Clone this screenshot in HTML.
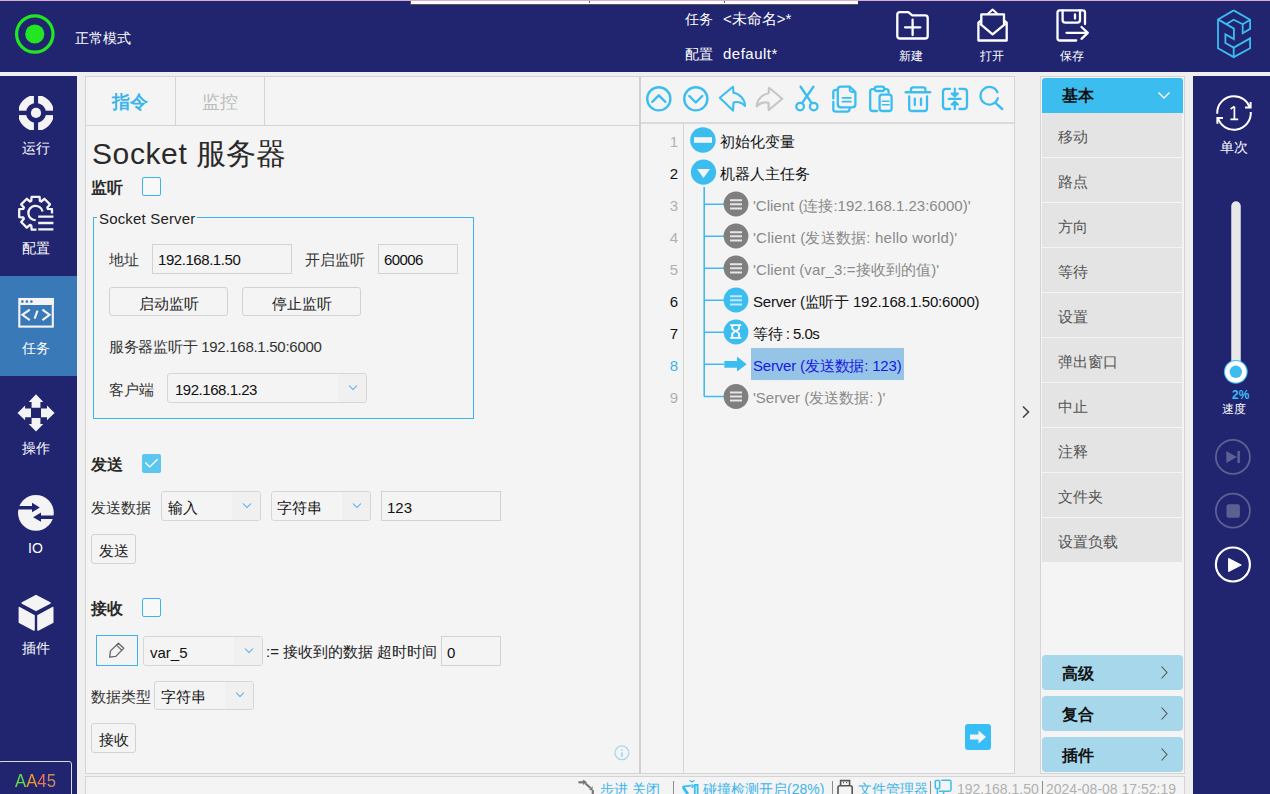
<!DOCTYPE html>
<html><head><meta charset="utf-8">
<style>
*{margin:0;padding:0;box-sizing:border-box}
html,body{width:1270px;height:794px;overflow:hidden;background:#efefef;font-family:"Liberation Sans",sans-serif;color:#222}
.a{position:absolute}
.nav{background:#212570}
.t{position:absolute;white-space:nowrap;line-height:20px;height:20px}
.w{color:#fff}
.inp{position:absolute;border:1px solid #d2d2d2;background:#f4f4f4}
.btn{position:absolute;border:1px solid #d2d2d2;border-radius:3px;background:#f4f4f4}
.cmb{position:absolute;border:1px solid #d6d6d6;border-radius:3px;background:#f4f4f4;overflow:hidden}
.cmb i{position:absolute;right:0;top:0;bottom:0;width:28px;background:#f0f0f0}
.pi{position:absolute;left:1042px;width:140px;height:44px;background:#e4e4e4}
.grp{position:absolute;left:1042px;width:141px;height:35px;background:#a6d7eb;border-radius:4px}
</style></head>
<body>
<!-- ===== backgrounds ===== -->
<div class="a nav" style="left:0;top:0;width:1270px;height:72px"></div>
<div class="a" style="left:0;top:0;width:1270px;height:1px;background:#d9acd0"></div>
<div class="a" style="left:410px;top:1px;width:448px;height:4px;background:#fff;border-bottom:1px solid #555;border-left:1px solid #555"></div>
<div class="a" style="left:589px;top:1px;width:1px;height:2px;background:#666"></div>
<div class="a" style="left:724px;top:1px;width:1px;height:2px;background:#666"></div>

<div class="a nav" style="left:0;top:76px;width:77px;height:718px"></div>
<div class="a" style="left:0;top:276px;width:77px;height:100px;background:#3a79b8"></div>
<div class="a" style="left:-2px;top:761px;width:74px;height:40px;border:1.5px solid #dcdce6;border-radius:3px"></div>

<div class="a nav" style="left:1193px;top:76px;width:77px;height:718px"></div>

<!-- left panel -->
<div class="a" style="left:85px;top:76px;width:556px;height:698px;background:#f4f4f4;border:1px solid #d4d4d4"></div>
<div class="a" style="left:86px;top:125px;width:554px;height:1px;background:#d4d4d4"></div>
<div class="a" style="left:175px;top:77px;width:1px;height:48px;background:#d4d4d4"></div>
<div class="a" style="left:264px;top:77px;width:1px;height:48px;background:#d4d4d4"></div>

<!-- middle panel -->
<div class="a" style="left:640px;top:76px;width:375px;height:698px;background:#f4f4f4;border:1px solid #d4d4d4"></div>
<div class="a" style="left:639px;top:77px;width:2px;height:696px;background:#d0d0d0"></div>
<div class="a" style="left:641px;top:122px;width:373px;height:2px;background:#dadada"></div>
<div class="a" style="left:683px;top:124px;width:1px;height:649px;background:#d4d4d4"></div>

<!-- palette -->
<div class="a" style="left:1040px;top:76px;width:145px;height:698px;background:#f4f4f4;border:1px solid #d4d4d4"></div>

<!-- status bar -->
<div class="a" style="left:85px;top:776px;width:1100px;height:20px;background:#f4f4f4;border:1px solid #d4d4d4"></div>

<!-- ===== icons ===== -->
<svg class="a" style="left:0;top:0" width="1270" height="794" viewBox="0 0 1270 794">
 <!-- status indicator -->
 <circle cx="34.8" cy="34" r="18.2" fill="none" stroke="#22e622" stroke-width="3.2"/>
 <circle cx="34.8" cy="34" r="9.6" fill="#22e622"/>
 <!-- new folder -->
 <g fill="none" stroke="#fff" stroke-width="2.3" stroke-linejoin="round" stroke-linecap="round">
  <path d="M900,12.1 L908.3,12.1 L912.3,15.4 L925.2,15.4 Q927.7,15.4 927.7,18 L927.7,36 Q927.7,38.5 925.2,38.5 L900,38.5 Q897.3,38.5 897.3,36 L897.3,14.7 Q897.3,12.1 900,12.1Z"/>
  <path d="M905,27.3 H920.3 M912.6,19.7 V35"/>
  <!-- open envelope -->
  <path d="M981.3,23.5 V14.3 H1004 V23.5"/>
  <path d="M981,20.5 L978.4,22.6 V40.5 H1006.7 V22.6 L1004,20.5"/>
  <path d="M980.5,24.2 L992.6,34.3 L1005,24.2"/>
  <!-- save -->
  <path d="M1076.2,40.5 H1059.8 Q1057.5,40.5 1057.5,38.2 V12.6 Q1057.5,10.3 1059.8,10.3 H1082.7 Q1085,10.3 1085,12.6 V24"/>
  <path d="M1062.6,10.5 V20 Q1062.6,22.6 1065.2,22.6 H1077.4 Q1080,22.6 1080,20 V10.5"/>
  <path d="M1075,14.5 V18.5"/>
  <path d="M1066.5,32.8 H1087.5 M1081.5,27 L1087.8,32.8 L1081.5,38.8"/>
 </g>
 <!-- logo -->
 <g fill="none" stroke="#3cbdf0" stroke-width="1.8" stroke-linejoin="miter">
  <path d="M1233.7,10.4 L1218,19.4 L1218,48.3 L1233.7,57.1 L1250.1,48.3 L1250.1,38.4 L1233.7,47.6 L1225.4,43 L1225.4,34.2 L1233.9,39.1 L1233.9,28.6 L1218,19.4"/>
  <path d="M1233.7,10.4 L1250.1,19.75 L1250.1,28.9 L1242.7,33.2 L1242.7,24.2 L1250.1,19.75"/>
  <path d="M1226.1,24.2 L1233.7,19.75 L1242.7,24.2"/>
  <path d="M1233.7,47.6 V57.1"/>
 </g>

 <!-- sidebar: run -->
 <defs>
  <mask id="mrun"><rect x="0" y="76" width="77" height="100" fill="#fff"/><rect x="33.9" y="90" width="4.2" height="46" fill="#000"/><rect x="14" y="110.7" width="46" height="4.4" fill="#000"/></mask>
 </defs>
 <g mask="url(#mrun)">
  <circle cx="36" cy="112.9" r="14" fill="none" stroke="#f4f4f4" stroke-width="8"/>
 </g>
 <circle cx="36" cy="112.9" r="5.1" fill="#f4f4f4"/>
 <!-- sidebar: config gear -->
 <defs>
  <mask id="mgear"><rect x="0" y="176" width="77" height="100" fill="#fff"/><rect x="36.5" y="213.5" width="30" height="30" fill="#000"/></mask>
 </defs>
 <g fill="none" stroke="#f4f4f4" stroke-width="2.3" stroke-linejoin="round">
  <path mask="url(#mgear)" d="M31.3,200.9 L31.6,196.8 L39.6,196.8 L39.9,200.9 L41.2,201.5 L44.4,198.8 L50.0,204.4 L47.3,207.6 L47.9,208.9 L52.0,209.2 L52.0,217.2 L47.9,217.5 L47.3,218.8 L50.0,222.0 L44.4,227.6 L41.2,224.9 L39.9,225.5 L39.6,229.6 L31.6,229.6 L31.3,225.5 L30.0,224.9 L26.8,227.6 L21.2,222.0 L23.9,218.8 L23.3,217.5 L19.2,217.2 L19.2,209.2 L23.3,208.9 L23.9,207.6 L21.2,204.4 L26.8,198.8 L30.0,201.5Z"/>
  <path d="M35.7,220.2 A7.2,7.2 0 1 1 42.6,211.5"/>
  <path d="M38.2,216.6 H53.4 M38.2,223 H53.4 M38.2,229.4 H53.4"/>
 </g>
 <!-- sidebar: task -->
 <g fill="none" stroke="#f4f4f4" stroke-width="2.1">
  <rect x="19.3" y="299" width="33.5" height="27.6"/>
  <path d="M29.8,309.7 L22.4,314.8 L29.8,320.1 M37.5,310.6 L34.6,318.7 M42.4,309.7 L49.6,314.8 L42.4,320.1"/>
 </g>
 <rect x="19" y="298" width="34.8" height="7" fill="#f4f4f4"/>
 <circle cx="22.4" cy="301.6" r="1.3" fill="#3a79b8"/><circle cx="26.9" cy="301.6" r="1.3" fill="#3a79b8"/><circle cx="31.4" cy="301.6" r="1.3" fill="#3a79b8"/>
 <!-- sidebar: operate -->
 <g fill="#f4f4f4">
  <path d="M36,394.3 L43.3,401.9 L40.4,401.9 L40.4,407.8 L31.6,407.8 L31.6,401.9 L28.7,401.9Z"/>
  <path d="M36,431.5 L43.3,423.9 L40.4,423.9 L40.4,418 L31.6,418 L31.6,423.9 L28.7,423.9Z"/>
  <path d="M17.5,412.9 L25.1,405.6 L25.1,408.5 L31,408.5 L31,417.3 L25.1,417.3 L25.1,420.2Z"/>
  <path d="M54.6,412.9 L47,405.6 L47,408.5 L41,408.5 L41,417.3 L47,417.3 L47,420.2Z"/>
 </g>
 <!-- sidebar: IO -->
 <circle cx="35.9" cy="512.9" r="17.9" fill="#f4f4f4"/>
 <g fill="#212570">
  <path d="M17,505.9 H32 V502.7 L39.8,507.6 L32,512.3 V509.4 H17Z"/>
  <path d="M55,515.5 H41 V512.6 L33.1,517.2 L41,521.8 V519 H55Z"/>
 </g>
 <!-- sidebar: plugin -->
 <g fill="#f4f4f4" stroke="#f4f4f4" stroke-width="1.6" stroke-linejoin="round">
  <path d="M36,595.6 L50,603 L36,610.4 L22.2,603Z"/>
  <path d="M19.4,607.6 L34,615.6 L34,630 L19.4,622.2Z"/>
  <path d="M52.7,607.6 L38,615.6 L38,630 L52.7,622.2Z"/>
 </g>

 <!-- right sidebar: single -->
 <g fill="none" stroke="#fff" stroke-width="2">
  <path d="M1249.8,107.4 A16.8,16.8 0 0 0 1234,96.2 A16.8,16.8 0 0 0 1217.2,113.7"/>
  <path d="M1217.9,117.8 A16.8,16.8 0 0 0 1250.77,112"/>
  <path d="M1250.6,102 V107.5 H1245" stroke-linejoin="miter"/>
  <path d="M1217.4,123.8 V118 H1223" stroke-linejoin="miter"/>
 </g>
 <!-- slider -->
 <line x1="1236" y1="206" x2="1236" y2="370" stroke="#e8e8e8" stroke-width="9.5" stroke-linecap="round"/>
 <circle cx="1235.8" cy="371.8" r="11.9" fill="#3cbdf0"/>
 <circle cx="1235.8" cy="371.8" r="10.8" fill="#fff"/>
 <circle cx="1235.8" cy="371.8" r="6.2" fill="#3cbdf0"/>
 <!-- step / stop / play -->
 <circle cx="1232.9" cy="456.9" r="17" fill="none" stroke="#5d6092" stroke-width="1.8"/>
 <path d="M1226.3,451 L1236.9,457 L1226.3,462.9Z M1237.4,451 H1239.9 V462.9 H1237.4Z" fill="#5d6092"/>
 <circle cx="1232.9" cy="510.7" r="17" fill="none" stroke="#5d6092" stroke-width="1.8"/>
 <rect x="1226.5" y="504.3" width="13.4" height="13.4" rx="2" fill="#5d6092"/>
 <circle cx="1232.9" cy="564.5" r="17" fill="none" stroke="#fff" stroke-width="2.2"/>
 <path d="M1228.6,558.4 L1241.3,565 L1228.6,571.6Z" fill="#fff" stroke="#fff" stroke-width="1" stroke-linejoin="round"/>
</svg>

<!-- ===== header text ===== -->
<div class="t w" style="left:75px;top:28px;font-size:14px">正常模式</div>
<div class="t w" style="left:685px;top:9px;font-size:14px">任务</div>
<div class="t w" style="left:723px;top:9px;font-size:15px">&lt;未命名&gt;*</div>
<div class="t w" style="left:685px;top:44px;font-size:14px">配置</div>
<div class="t w" style="left:723px;top:44px;font-size:15px;letter-spacing:0.5px">default*</div>
<div class="t w" style="left:899px;top:46px;font-size:12px">新建</div>
<div class="t w" style="left:980px;top:46px;font-size:12px">打开</div>
<div class="t w" style="left:1060px;top:46px;font-size:12px">保存</div>

<!-- sidebar text -->
<div class="t w" style="left:22px;top:138px;font-size:14px">运行</div>
<div class="t w" style="left:22px;top:238px;font-size:14px">配置</div>
<div class="t w" style="left:22px;top:338px;font-size:14px">任务</div>
<div class="t w" style="left:22px;top:438px;font-size:14px">操作</div>
<div class="t w" style="left:28px;top:538px;font-size:14px">IO</div>
<div class="t w" style="left:22px;top:638px;font-size:14px">插件</div>
<div class="t" style="left:15px;top:770px;font-size:19px;line-height:22px;height:22px;transform:scaleX(0.88);transform-origin:0 0"><span style="color:#63dd47">A</span><span style="color:#e99b2c">A</span><span style="color:#f2725c">4</span><span style="color:#c58c5c">5</span></div>

<!-- right sidebar text -->
<div class="t w" style="left:1220px;top:137px;font-size:14px">单次</div>
<div class="t" style="left:1232px;top:385px;font-size:12px;color:#3cbdf0;font-weight:bold">2%</div>
<div class="t w" style="left:1222px;top:399px;font-size:12px;line-height:21px">速度</div>


<!-- ===== left panel content ===== -->
<div class="t" style="left:112px;top:92px;font-size:18px;font-weight:bold;color:#3cb4ea">指令</div>
<div class="t" style="left:202px;top:92px;font-size:18px;color:#bdbdbd">监控</div>
<div class="t" style="left:92px;top:137px;font-size:30px;line-height:34px;height:34px;color:#2a2a2a"><span style="letter-spacing:0.6px">Socket</span> 服务器</div>
<div class="t" style="left:91px;top:178px;font-size:16px;font-weight:bold;color:#2a2a2a">监听</div>
<div class="a" style="left:142px;top:177px;width:19px;height:19px;border:1px solid #3cb4ea;border-radius:2px;background:#f8f8f8"></div>

<!-- group box -->
<div class="a" style="left:93px;top:217px;width:381px;height:202px;border:1px solid #3cb4ea"></div>
<div class="t" style="left:97px;top:209px;font-size:15px;padding:0 2px;background:#f4f4f4;color:#222;letter-spacing:0.17px">Socket Server</div>
<div class="t" style="left:109px;top:250px;font-size:15px;color:#333">地址</div>
<div class="inp" style="left:152px;top:244px;width:140px;height:30px"></div>
<div class="t" style="left:158px;top:250px;font-size:15px;color:#111;letter-spacing:-0.44px">192.168.1.50</div>
<div class="t" style="left:305px;top:250px;font-size:15px;color:#333">开启监听</div>
<div class="inp" style="left:378px;top:244px;width:80px;height:30px"></div>
<div class="t" style="left:384px;top:250px;font-size:15px;color:#111;letter-spacing:-0.6px">60006</div>
<div class="btn" style="left:109px;top:287px;width:119px;height:29px"></div>
<div class="t" style="left:139px;top:294px;font-size:15px;color:#222">启动监听</div>
<div class="btn" style="left:242px;top:287px;width:119px;height:29px"></div>
<div class="t" style="left:272px;top:294px;font-size:15px;color:#222">停止监听</div>
<div class="t" style="left:109px;top:337px;font-size:15px;color:#333;letter-spacing:-0.28px">服务器监听于 192.168.1.50:6000</div>
<div class="t" style="left:109px;top:380px;font-size:15px;color:#333">客户端</div>
<div class="cmb" style="left:167px;top:373px;width:200px;height:30px"><i></i></div>
<div class="t" style="left:175px;top:380px;font-size:15px;color:#111;letter-spacing:-0.47px">192.168.1.23</div>

<div class="t" style="left:91px;top:455px;font-size:16px;font-weight:bold;color:#2a2a2a">发送</div>
<div class="a" style="left:142px;top:454px;width:19px;height:19px;border-radius:2px;background:#5bc6ef"></div>
<div class="t" style="left:91px;top:498px;font-size:15px;color:#333">发送数据</div>
<div class="cmb" style="left:161px;top:491px;width:100px;height:30px"><i></i></div>
<div class="t" style="left:168px;top:498px;font-size:15px;color:#111">输入</div>
<div class="cmb" style="left:271px;top:491px;width:100px;height:30px"><i></i></div>
<div class="t" style="left:277px;top:498px;font-size:15px;color:#111">字符串</div>
<div class="inp" style="left:381px;top:491px;width:120px;height:30px"></div>
<div class="t" style="left:387px;top:498px;font-size:15px;color:#111">123</div>
<div class="btn" style="left:91px;top:534px;width:45px;height:30px"></div>
<div class="t" style="left:99px;top:541px;font-size:15px;color:#222">发送</div>

<div class="t" style="left:91px;top:599px;font-size:16px;font-weight:bold;color:#2a2a2a">接收</div>
<div class="a" style="left:142px;top:598px;width:19px;height:19px;border:1px solid #3cb4ea;border-radius:2px;background:#f8f8f8"></div>
<div class="a" style="left:96px;top:635px;width:42px;height:31px;border:1px solid #3cb4ea;background:#f4f4f4"></div>
<div class="cmb" style="left:143px;top:636px;width:120px;height:30px"><i></i></div>
<div class="t" style="left:150px;top:643px;font-size:15px;color:#111">var_5</div>
<div class="t" style="left:266px;top:642px;font-size:15px;color:#222">:= 接收到的数据 超时时间</div>
<div class="inp" style="left:441px;top:636px;width:60px;height:30px"></div>
<div class="t" style="left:447px;top:643px;font-size:15px;color:#111">0</div>
<div class="t" style="left:91px;top:687px;font-size:15px;color:#333">数据类型</div>
<div class="cmb" style="left:154px;top:681px;width:100px;height:29px"><i></i></div>
<div class="t" style="left:161px;top:687px;font-size:15px;color:#111">字符串</div>
<div class="btn" style="left:91px;top:723px;width:45px;height:30px"></div>
<div class="t" style="left:99px;top:730px;font-size:15px;color:#222">接收</div>


<!-- palette bg -->
<div class="a" style="left:1042px;top:78px;width:141px;height:35px;background:#3cbdf0;border-radius:3px 3px 0 0"></div>
<div class="pi" style="top:113px"></div>
<div class="pi" style="top:158px"></div>
<div class="pi" style="top:203px"></div>
<div class="pi" style="top:248px"></div>
<div class="pi" style="top:293px"></div>
<div class="pi" style="top:338px"></div>
<div class="pi" style="top:383px"></div>
<div class="pi" style="top:428px"></div>
<div class="pi" style="top:473px"></div>
<div class="pi" style="top:518px"></div>
<div class="grp" style="top:655px"></div>
<div class="grp" style="top:696px"></div>
<div class="grp" style="top:737px"></div>
<!-- ===== middle toolbar icons ===== -->
<svg class="a" style="left:0;top:0" width="1270" height="794" viewBox="0 0 1270 794">
 <g fill="none" stroke="#3cbdf0" stroke-width="2.4" stroke-linecap="round" stroke-linejoin="round">
  <circle cx="658.8" cy="98.8" r="11.6"/>
  <path d="M652.3,101.8 L658.8,95.3 L665.3,101.8"/>
  <circle cx="695.8" cy="98.8" r="11.6"/>
  <path d="M689.3,96 L695.8,102.5 L702.3,96"/>
  <path d="M719.8,97.8 L733,86.8 L733.5,92.8 C739,93.5 745,99 745,106 C741,101.5 737,101.5 733.5,102.4 L733,110.6 Z" stroke-width="2.1"/>
  <circle cx="800.1" cy="106.6" r="3.8" stroke-width="2.3"/>
  <circle cx="813.7" cy="106.6" r="3.8" stroke-width="2.3"/>
  <path d="M800.6,86.8 L811.4,102.6 M813.4,86.8 L802.4,102.6" stroke-width="2.4"/>
  <!-- copy -->
  <path d="M839.8,107.4 H852.2 Q855.4,107.4 855.4,104.2 V92 L849.6,86.6 H841 Q837.8,86.6 837.8,89.8 V104.2 Q837.8,107.4 841,107.4Z" stroke-width="2.3"/>
  <path d="M849.6,86.8 V89.6 Q849.6,92 852,92 H855.2" stroke-width="1.8"/>
  <path d="M842.4,97.9 H850.8 M842.4,101.7 H850.8" stroke-width="1.8"/>
  <path d="M837.5,89.9 H835.8 Q833.3,89.9 833.3,92.4 V98.5 M833.3,102 V109 Q833.3,111.7 836,111.7 H847 Q849.6,111.7 849.6,108.8" stroke-width="2.3"/>
  <!-- paste -->
  <path d="M874,89.2 H872.4 Q870.2,89.2 870.2,91.6 V108.8 Q870.2,111 872.6,111 H877" stroke-width="2.3"/>
  <path d="M884.6,89.2 H886.2 Q888.6,89.2 888.6,91.8 V93.2" stroke-width="2.3"/>
  <rect x="874.8" y="86.6" width="9.4" height="4.4" rx="2" stroke-width="2.3"/>
  <rect x="879.6" y="94.6" width="12" height="16.4" rx="2.4" stroke-width="2.3"/>
  <path d="M882.4,101.3 H889 M882.4,104.7 H889" stroke-width="1.6"/>
  <!-- delete -->
  <path d="M905.8,92.3 H930" stroke-width="2.6"/>
  <path d="M911,92 V89.5 Q911,87.4 913.4,87.4 H923 Q925.4,87.4 925.4,89.5 V92" stroke-width="2.3"/>
  <path d="M909.2,96.4 V108.6 Q909.2,111 911.6,111 H924.6 Q927,111 927,108.6 V96.4" stroke-width="2.3"/>
  <path d="M914.8,98.6 V105 M921,98.6 V105" stroke-width="2.3"/>
  <!-- collapse -->
  <path d="M950,88.8 H946 Q943,88.8 943,91.8 V106 Q943,109 946,109 H950 M959.4,88.8 H963.6 Q967,88.8 967,92 V106 Q967,109 963.6,109 H959.4" stroke-width="2.3"/>
  <path d="M948.7,98.9 H960.6" stroke-width="2.3"/>
  <path d="M954.8,88.6 V95.5 M954.8,102.4 V109.2" stroke-width="2.2"/>
  <path d="M951.6,93.6 L954.8,96.4 L958,93.6 Z M951.6,104.4 L954.8,101.6 L958,104.4 Z" stroke-width="2"/>
  <!-- search -->
  <path d="M997.4,92.2 A8.8,8.8 0 1 0 997.8,98.2" stroke-width="2.3"/>
  <path d="M996,103.4 L1002.2,109" stroke-width="2.4"/>
 </g>
 <path d="M782.3,98.7 L769,87.8 L768.6,93.2 C763,94 756.7,99.5 756.7,106.5 C760.5,102 764.5,101.8 768.6,102.8 L768.6,110.1 Z" fill="none" stroke="#c6c6c6" stroke-width="2.1" stroke-linejoin="round"/>

 <!-- tree lines -->
 <g stroke="#3cbdf0" stroke-width="1.6" fill="none">
  <path d="M704.2,187 V396.5"/>
  <path d="M704.2,204.3 H724 M704.2,236.3 H724 M704.2,268.3 H724 M704.2,300.3 H724 M704.2,332.3 H724 M704.2,364.3 H724 M704.2,396.5 H724"/>
 </g>
 <!-- row 1 -->
 <circle cx="702.9" cy="140" r="12.8" fill="#3cbdf0"/>
 <rect x="694" y="137.2" width="18" height="5.6" fill="#f4f4f4"/>
 <!-- row 2 -->
 <circle cx="703.5" cy="172.2" r="12.6" fill="#3cbdf0"/>
 <path d="M697,169 H710 L703.5,178Z" fill="#f4f4f4"/>
 <!-- list icons -->
 <g>
  <circle cx="736" cy="204" r="12.4" fill="#7f7f7f"/>
  <circle cx="736" cy="236" r="12.4" fill="#7f7f7f"/>
  <circle cx="736" cy="268" r="12.4" fill="#7f7f7f"/>
  <circle cx="736" cy="300" r="12.4" fill="#3cbdf0"/>
  <circle cx="736" cy="332" r="12.4" fill="#3cbdf0"/>
  <circle cx="736" cy="396.5" r="12.4" fill="#7f7f7f"/>
 </g>
 <g stroke="#e6e6e6" stroke-width="2">
  <path d="M730,200.2 H742 M730,204.3 H742 M730,208.4 H742"/>
  <path d="M730,232.2 H742 M730,236.3 H742 M730,240.4 H742"/>
  <path d="M730,264.2 H742 M730,268.3 H742 M730,272.4 H742"/>
  <path d="M730,396.5 H742 M730,392.4 H742 M730,400.6 H742"/>
 </g>
 <g stroke="#bfe9fa" stroke-width="2">
  <path d="M730,296.2 H742 M730,300.3 H742 M730,304.4 H742"/>
 </g>
 <!-- hourglass -->
 <path fill="#fff" fill-rule="evenodd" d="M730.2,324.2 H741.2 V326 H740 V329.2 L737.6,331.2 L740,333.2 V337 H741.2 V338.8 H730.2 V337 H731.3 V333.2 L733.8,331.2 L731.3,329.2 V326 H730.2 Z M733.2,326 H738.2 V328.6 L735.7,330.3 L733.2,328.6 Z M733.2,337 H738.2 V333.8 L735.7,332.1 L733.2,333.8 Z"/>
 <!-- arrow -->
 <path d="M724.3,361 H737 V356.6 L746.7,364.3 L737,371.6 V367.7 H724.3Z" fill="#3cbdf0"/>
 <!-- bottom right arrow button -->
 <rect x="965" y="724" width="26" height="26" rx="3" fill="#39bdf6"/>
 <path d="M970,734.5 H978.5 V730.5 L986,737 L978.5,743.5 V739.5 H970Z" fill="#f4f4f4"/>
 <!-- right chevron -->
 <path d="M1023,406.5 L1028.5,412 L1023,417.5" fill="none" stroke="#444" stroke-width="1.6"/>
 <!-- info -->
 <circle cx="621.9" cy="752.8" r="6.9" fill="none" stroke="#a6daf2" stroke-width="1.3"/>
 <path d="M621.9,752.3 V756.8 M621.9,749.2 V750.7" stroke="#a6daf2" stroke-width="1.8"/>
 <!-- combos chevrons -->
 <g fill="none" stroke="#48aaf6" stroke-width="1.05">
  <path d="M349,385.5 L353,389.5 L357,385.5"/>
  <path d="M243,503.5 L247,507.5 L251,503.5"/>
  <path d="M353,503.5 L357,507.5 L361,503.5"/>
  <path d="M245,648.5 L249,652.5 L253,648.5"/>
  <path d="M236,692.5 L240,696.5 L244,692.5"/>
 </g>
 <!-- check -->
 <path d="M145.3,462.6 L149.7,466.9 L157.7,459.3" fill="none" stroke="#fff" stroke-width="1.4"/>
 <!-- pencil -->
 <path d="M109.6,657.1 L110.5,650.9 L118.4,643.2 L123.7,648.3 L115.8,656.4 Z M117,645.6 L122,650.4" fill="none" stroke="#666" stroke-width="1.3" stroke-linejoin="round"/>
 <!-- palette chevrons -->
 <path d="M1158.5,92.5 L1164,98 L1169.5,92.5" fill="none" stroke="#fff" stroke-width="1.4"/>
 <g fill="none" stroke="#555" stroke-width="1.1">
  <path d="M1161.5,666.5 L1167,672.5 L1161.5,678.5"/>
  <path d="M1161.5,707.5 L1167,713.5 L1161.5,719.5"/>
  <path d="M1161.5,748.5 L1167,754.5 L1161.5,760.5"/>
 </g>

 <!-- status icons -->
 <g fill="none" stroke="#777" stroke-width="2.2">
  <path d="M578.5,782.3 H583.5"/>
  <path d="M585.5,783.5 L590.5,788"/>
  <path d="M592.8,790 V794"/>
 </g>
 <g fill="#777">
  <path d="M583,779.5 L587,782.3 L583,785Z"/>
  <path d="M589,789.8 L592.6,786.2 L592.6,790.4Z"/>
 </g>
 <g fill="none" stroke="#3cbdf0" stroke-width="1.8">
  <path d="M682.5,786.6 Q687,786 691.4,785.6"/>
  <path d="M683,787 L687.8,794" stroke-width="3"/>
  <path d="M694.8,794 V785 H697.6 V794"/>
  <path d="M689.5,780.2 L692,782 L694.4,780.2" stroke-width="1.3"/>
  <path d="M691.5,784.5 L693.5,786.3 L691.5,788" stroke-width="1.3"/>
 </g>
 <g fill="none" stroke="#555" stroke-width="1.6">
  <path d="M840.6,785.8 V780.6 H849.6 V785.8"/>
  <path d="M838,794 V787.6 Q838,785.8 839.8,785.8 H850.4 Q852.2,785.8 852.2,787.6 V794"/>
 </g>
 <path d="M843,782.6 H844 M846.2,782.6 H847.2" stroke="#555" stroke-width="1.4"/>
 <g fill="none" stroke="#3cbdf0" stroke-width="1.5">
  <rect x="935.3" y="780.5" width="4.4" height="8" rx="1"/>
  <path d="M941.3,780.3 H949.4 Q951,780.3 951,782 V789.6 Q951,791.3 949.4,791.3 H939"/>
  <path d="M937.4,788.6 V794 M943.6,791.3 V794"/>
 </g>
 <!-- envelope top -->
 <path d="M987.5,14.3 L992.6,9.6 L997.8,14.3" fill="none" stroke="#fff" stroke-width="2" stroke-linejoin="round"/>

 <path d="M1234.4,106.6 V119 M1230.6,109 L1234.4,106.4 M1230.4,119.3 H1238.2" fill="none" stroke="#fff" stroke-width="1.7"/>
</svg>

<!-- ===== tree text ===== -->
<div class="t" style="left:656px;top:132px;width:22px;text-align:right;font-size:15px;color:#b0b0b0">1</div>
<div class="t" style="left:656px;top:164px;width:22px;text-align:right;font-size:15px;color:#111">2</div>
<div class="t" style="left:656px;top:196px;width:22px;text-align:right;font-size:15px;color:#b0b0b0">3</div>
<div class="t" style="left:656px;top:228px;width:22px;text-align:right;font-size:15px;color:#b0b0b0">4</div>
<div class="t" style="left:656px;top:260px;width:22px;text-align:right;font-size:15px;color:#b0b0b0">5</div>
<div class="t" style="left:656px;top:292px;width:22px;text-align:right;font-size:15px;color:#111">6</div>
<div class="t" style="left:656px;top:324px;width:22px;text-align:right;font-size:15px;color:#111">7</div>
<div class="t" style="left:656px;top:356px;width:22px;text-align:right;font-size:15px;color:#3cb4ea">8</div>
<div class="t" style="left:656px;top:388px;width:22px;text-align:right;font-size:15px;color:#b0b0b0">9</div>

<div class="t" style="left:720px;top:132px;font-size:15px;color:#111">初始化变量</div>
<div class="t" style="left:720px;top:164px;font-size:15px;color:#111">机器人主任务</div>
<div class="t" style="left:753px;top:196px;font-size:15px;color:#8a8a8a">'Client (连接:192.168.1.23:6000)'</div>
<div class="t" style="left:753px;top:228px;font-size:15px;color:#8a8a8a;letter-spacing:0.22px">'Client (发送数据: hello world)'</div>
<div class="t" style="left:753px;top:260px;font-size:15px;color:#8a8a8a;letter-spacing:0.11px">'Client (var_3:=接收到的值)'</div>
<div class="t" style="left:753px;top:292px;font-size:15px;color:#111;letter-spacing:-0.21px">Server (监听于 192.168.1.50:6000)</div>
<div class="t" style="left:753px;top:324px;font-size:15px;color:#111;letter-spacing:-0.5px">等待 : 5.0s</div>
<div class="a" style="left:751px;top:348px;width:153px;height:32px;background:#96c4e6"></div>
<div class="t" style="left:753px;top:356px;font-size:15px;color:#1818e6;letter-spacing:-0.18px">Server (发送数据: 123)</div>
<div class="t" style="left:753px;top:388px;font-size:15px;color:#8a8a8a">'Server (发送数据: )'</div>

<!-- ===== palette ===== -->
<div class="t" style="left:1062px;top:86px;font-size:16px;font-weight:bold;color:#111">基本</div>
<div class="t" style="left:1058px;top:127px;font-size:15px;color:#555">移动</div>
<div class="t" style="left:1058px;top:172px;font-size:15px;color:#555">路点</div>
<div class="t" style="left:1058px;top:217px;font-size:15px;color:#555">方向</div>
<div class="t" style="left:1058px;top:262px;font-size:15px;color:#555">等待</div>
<div class="t" style="left:1058px;top:307px;font-size:15px;color:#555">设置</div>
<div class="t" style="left:1058px;top:352px;font-size:15px;color:#555">弹出窗口</div>
<div class="t" style="left:1058px;top:397px;font-size:15px;color:#555">中止</div>
<div class="t" style="left:1058px;top:442px;font-size:15px;color:#555">注释</div>
<div class="t" style="left:1058px;top:487px;font-size:15px;color:#555">文件夹</div>
<div class="t" style="left:1058px;top:532px;font-size:15px;color:#555">设置负载</div>
<div class="t" style="left:1062px;top:664px;font-size:16px;font-weight:bold;color:#111">高级</div>
<div class="t" style="left:1062px;top:705px;font-size:16px;font-weight:bold;color:#111">复合</div>
<div class="t" style="left:1062px;top:746px;font-size:16px;font-weight:bold;color:#111">插件</div>

<!-- ===== status bar ===== -->
<div class="t" style="left:600px;top:779px;font-size:14px;color:#3cb4ea">步进 关闭</div>
<div class="a" style="left:673px;top:781px;width:1px;height:14px;background:#8c8c8c"></div>
<div class="t" style="left:703px;top:779px;font-size:14px;color:#3cb4ea">碰撞检测开启(28%)</div>
<div class="a" style="left:832px;top:781px;width:1px;height:14px;background:#8c8c8c"></div>
<div class="t" style="left:858px;top:779px;font-size:14px;color:#3cb4ea">文件管理器</div>
<div class="a" style="left:930px;top:781px;width:1px;height:14px;background:#8c8c8c"></div>
<div class="t" style="left:957px;top:779px;font-size:14px;color:#b0b0b0">192.168.1.50</div>
<div class="a" style="left:1042px;top:781px;width:1px;height:14px;background:#8c8c8c"></div>
<div class="t" style="left:1046px;top:779px;font-size:14px;color:#b0b0b0">2024-08-08 17:52:19</div>

</body></html>
